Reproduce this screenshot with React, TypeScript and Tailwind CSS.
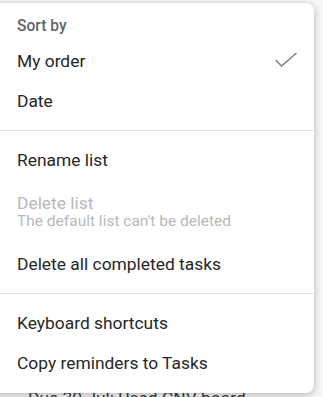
import React from 'react'

const font = { fontFamily: 'Roboto, "Noto Sans", sans-serif' }

function Item({ label }: { label: string }) {
  return (
    <div className="h-10 flex items-center pl-[17px] pr-[17px] text-[17.4px] leading-10 text-[#262626]">
      {label}
    </div>
  )
}

function Divider() {
  return (
    <div className="py-[9px]">
      <div className="h-px bg-[#e3e3e3]" />
    </div>
  )
}

export default function App() {
  return (
    <div className="relative w-[323px] h-[397px] overflow-hidden bg-[#f7f7f7]" style={font}>
      {/* page content under the menu */}
      <div className="pt-[388px] pl-[28px] text-[17.4px] leading-5 text-[#3c4043] whitespace-nowrap">
        Due 30 Jul: Used CNV board
      </div>

      {/* menu */}
      <div className="absolute left-[-10px] top-[3px] w-[324px] h-[390px] bg-white rounded-r-lg shadow-[0_2px_8px_rgba(0,0,0,0.28)] pl-[10px]">
        <div className="pt-[13px] pb-[5px] pl-[17px] text-[15.6px] leading-5 font-medium text-[#5f6368]">Sort by</div>

        <div className="h-10 flex items-center justify-between pl-[17px] pr-[16px] text-[17.4px] text-[#262626]">
          <span>My order</span>
          <svg width="24" height="16" viewBox="0 0 24 16" className="mb-[2px]">
            <path d="M1.5 8 L7.5 14 L22.5 1" fill="none" stroke="#7a7a7a" strokeWidth="1.4" />
          </svg>
        </div>
        <Item label="Date" />

        <Divider />

        <Item label="Rename list" />
        <div className="pt-[13px] pb-[15px] pl-[17px] text-[#b8b8b8]">
          <div className="text-[17.4px] leading-5">Delete list</div>
          <div className="text-[15.5px] leading-4">The default list can't be deleted</div>
        </div>
        <Item label="Delete all completed tasks" />

        <Divider />

        <Item label="Keyboard shortcuts" />
        <Item label="Copy reminders to Tasks" />
      </div>
    </div>
  )
}
